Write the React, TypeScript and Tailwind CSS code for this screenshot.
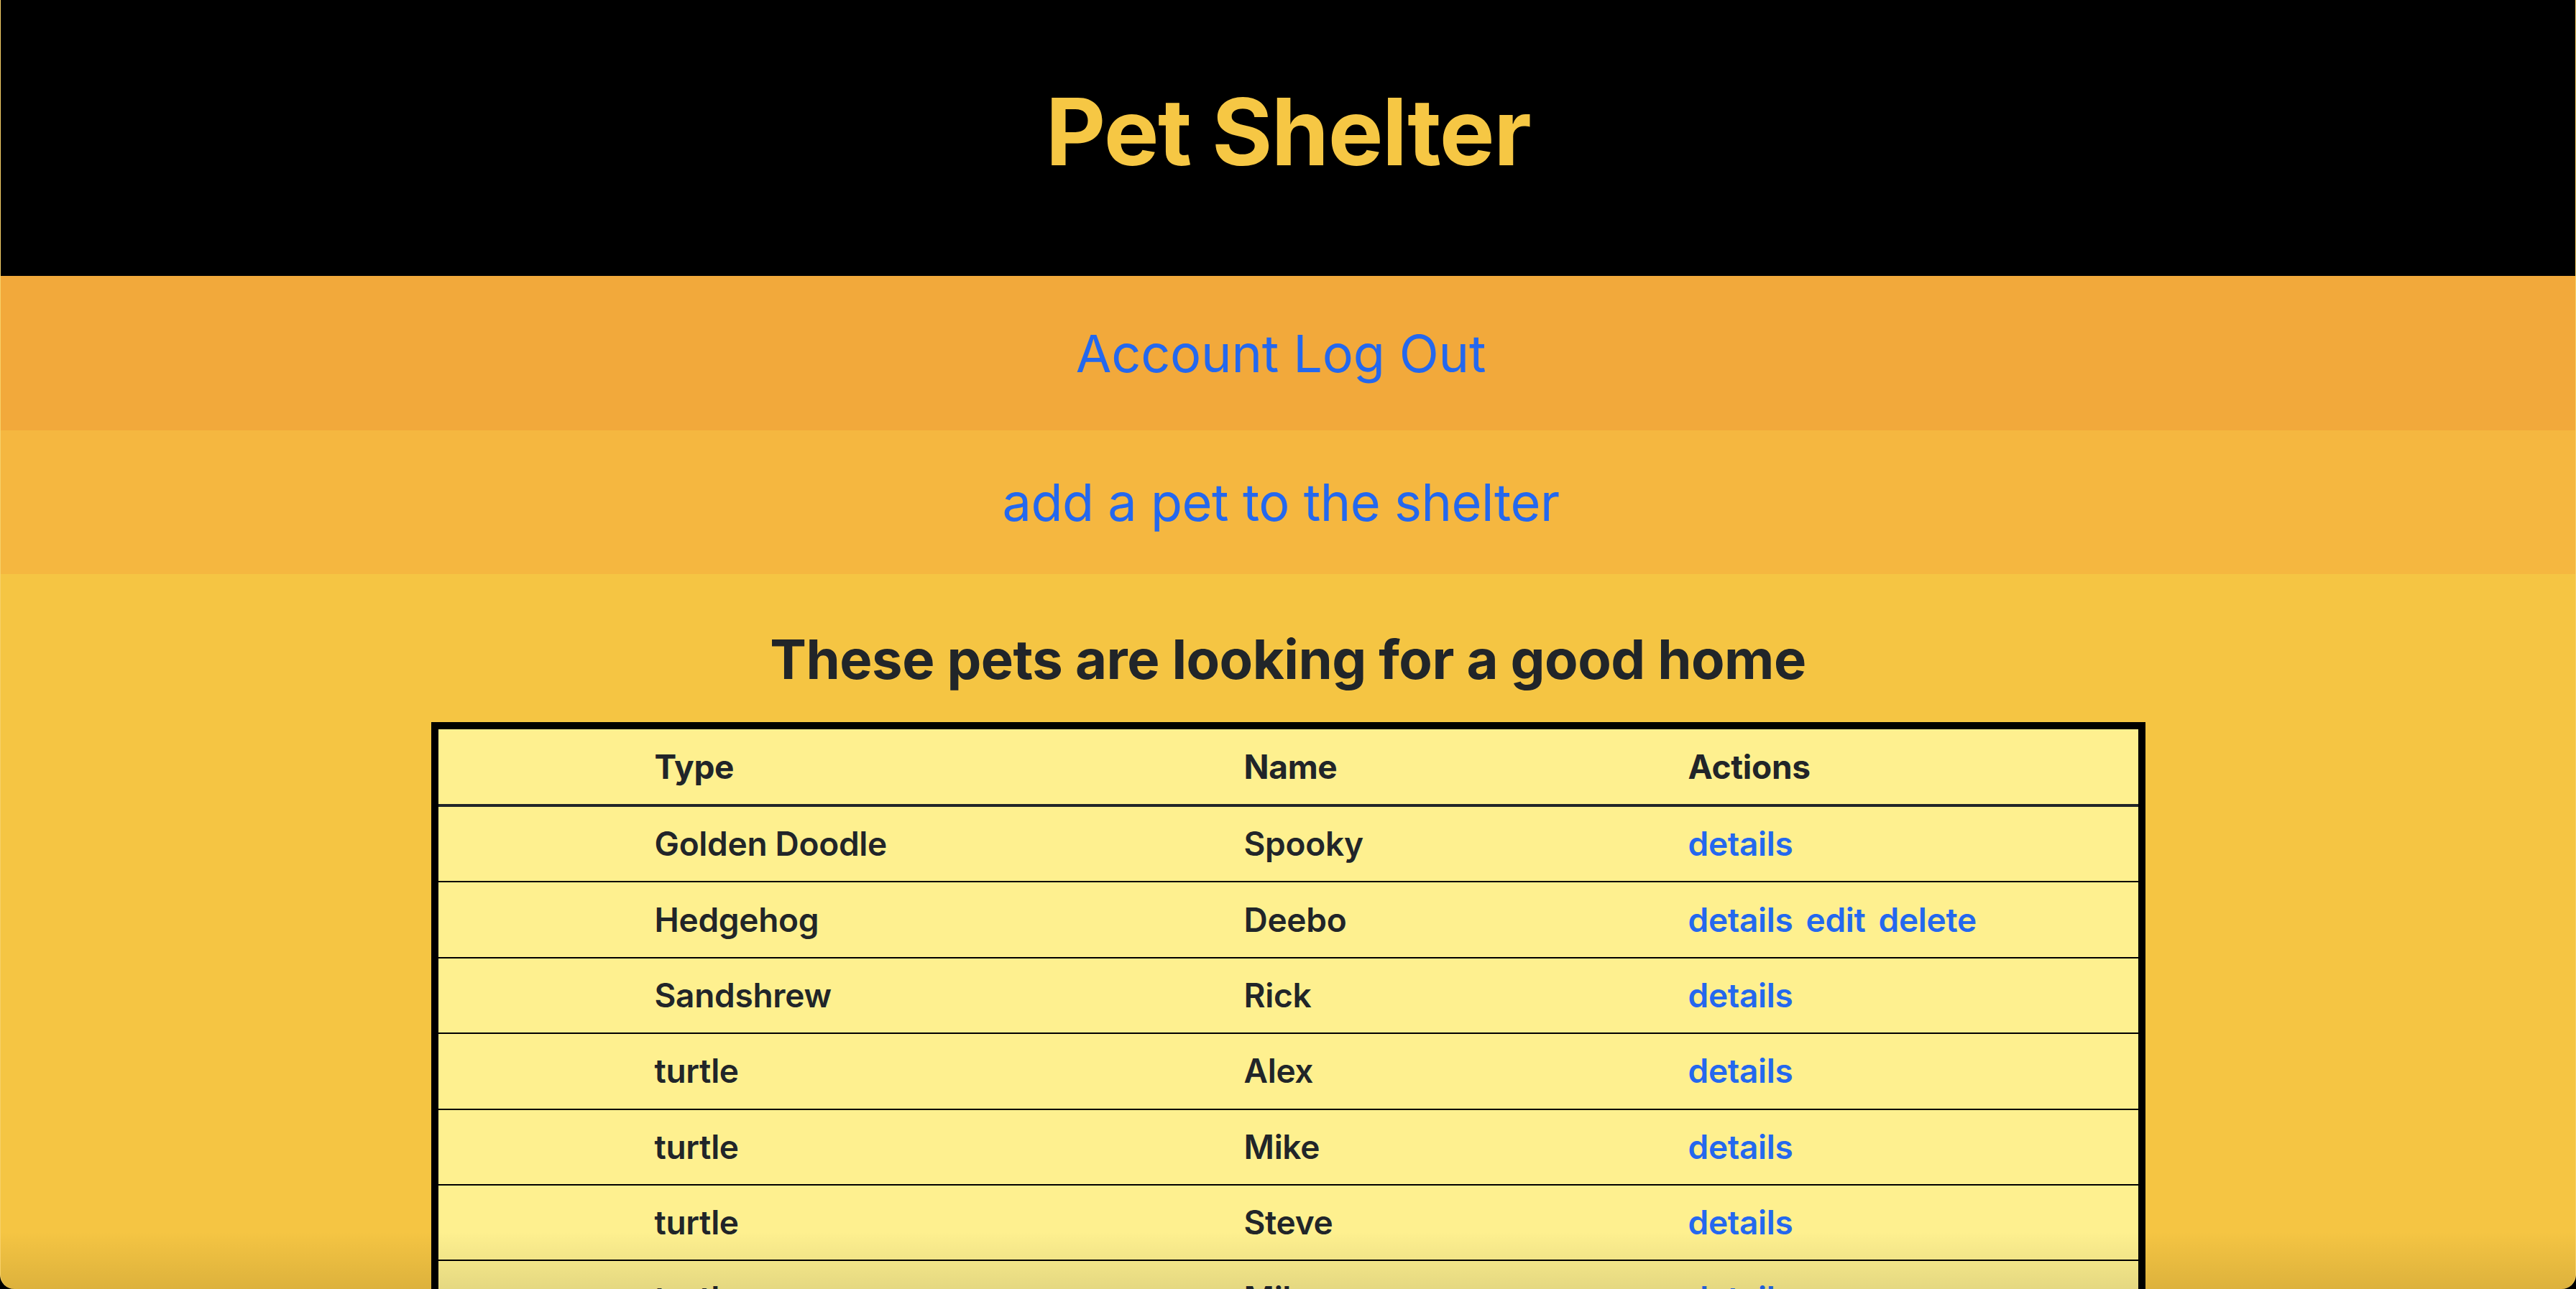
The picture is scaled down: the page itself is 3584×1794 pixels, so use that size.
import React from "react";

type Pet = { type: string; name: string; owned?: boolean };

const pets: Pet[] = [
  { type: "Golden Doodle", name: "Spooky" },
  { type: "Hedgehog", name: "Deebo", owned: true },
  { type: "Sandshrew", name: "Rick" },
  { type: "turtle", name: "Alex" },
  { type: "turtle", name: "Mike" },
  { type: "turtle", name: "Steve" },
  { type: "turtle", name: "Mike" },
  { type: "turtle", name: "Bob" },
];

function Row({ pet }: { pet: Pet }) {
  return (
    <div className="grid grid-cols-[301px_820px_618px_1fr] h-[105.4px] items-center border-b-2 border-black text-[46px] font-semibold text-[#212529] tracking-[-0.3px]">
      <div />
      <div>{pet.type}</div>
      <div>{pet.name}</div>
      <div className="flex gap-[18px] text-[#2468ee]">
        <a href="#">details</a>
        {pet.owned && <a href="#">edit</a>}
        {pet.owned && <a href="#">delete</a>}
      </div>
    </div>
  );
}

export default function App() {
  return (
    <div className="bg-black w-[3584px] h-[1794px] overflow-hidden" style={{ fontFamily: "Inter, 'Noto Sans', sans-serif" }}>
      <div className="relative h-[1794px] overflow-hidden rounded-b-[20px] bg-[#f5c543] border-x border-white/20">
        <header className="h-[384px] bg-black flex items-center justify-center pb-[18px]">
          <h1 className="text-[129px] font-bold text-[#f6c744] tracking-[-1.5px] leading-none">Pet Shelter</h1>
        </header>
        <nav className="h-[215px] bg-[#f2a93b] flex items-center justify-center pr-[20px]">
          <a href="#" className="text-[72px] text-[#2468ee] leading-none tracking-[-0.2px]">Account Log Out</a>
        </nav>
        <div className="h-[200px] bg-[#f5b740] flex items-center justify-center pr-[20px]">
          <a href="#" className="text-[72px] text-[#2468ee] leading-none tracking-[-0.5px]">add a pet to the shelter</a>
        </div>
        <main className="flex flex-col items-center">
          <h2 className="mt-[80px] text-[76px] font-bold text-[#212529] leading-none tracking-[-0.5px]">
            These pets are looking for a good home
          </h2>
          <div className="mt-[50px] w-[2385px] border-[10px] border-black bg-[#fef08f]">
            <div className="grid grid-cols-[301px_820px_618px_1fr] h-[108px] items-center border-b-4 border-[#212529] text-[46px] font-bold text-[#212529] tracking-[-0.3px]">
              <div />
              <div>Type</div>
              <div>Name</div>
              <div>Actions</div>
            </div>
            {pets.map((p, i) => (
              <Row key={i} pet={p} />
            ))}
          </div>
        </main>
        <div className="absolute inset-x-0 bottom-0 h-[80px] bg-gradient-to-b from-transparent to-black/10 pointer-events-none" />
      </div>
    </div>
  );
}
